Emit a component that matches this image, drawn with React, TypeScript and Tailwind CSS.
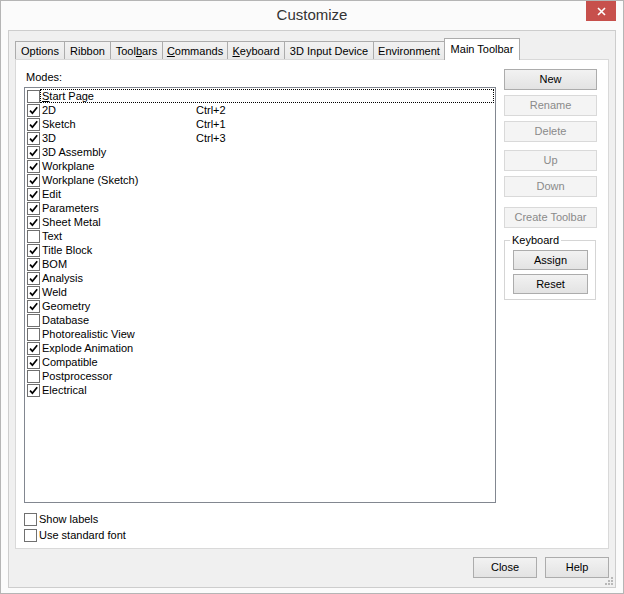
import React from "react";

type Mode = { name: React.ReactNode; on: boolean; key?: string };

const modes: Mode[] = [
  { name: <><u>S</u>tart Page</>, on: false },
  { name: "2D", on: true, key: "Ctrl+2" },
  { name: "Sketch", on: true, key: "Ctrl+1" },
  { name: "3D", on: true, key: "Ctrl+3" },
  { name: "3D Assembly", on: true },
  { name: "Workplane", on: true },
  { name: "Workplane (Sketch)", on: true },
  { name: "Edit", on: true },
  { name: "Parameters", on: true },
  { name: "Sheet Metal", on: true },
  { name: "Text", on: false },
  { name: "Title Block", on: true },
  { name: "BOM", on: true },
  { name: "Analysis", on: true },
  { name: "Weld", on: true },
  { name: "Geometry", on: true },
  { name: "Database", on: false },
  { name: "Photorealistic View", on: false },
  { name: "Explode Animation", on: true },
  { name: "Compatible", on: true },
  { name: "Postprocessor", on: false },
  { name: "Electrical", on: true },
];

const tabs: { label: React.ReactNode; w: string }[] = [
  { label: "Options", w: "w-[50px]" },
  { label: "Ribbon", w: "w-[47px]" },
  { label: <>Tool<u>b</u>ars</>, w: "w-[53px]" },
  { label: <><u>C</u>ommands</>, w: "w-[66px]" },
  { label: <><u>K</u>eyboard</>, w: "w-[58px]" },
  { label: "3D Input Device", w: "w-[90px]" },
  { label: "Environment", w: "w-[72px]" },
];

function Check({ on }: { on: boolean }) {
  return (
    <span className="w-[13px] h-[13px] border border-[#707070] bg-white flex items-center justify-center shrink-0">
      {on && (
        <svg width="9" height="9" viewBox="0 0 9 9">
          <path d="M1 4.6 L3.4 7.2 L8.2 1.2" stroke="#000" strokeWidth="1.7" fill="none" />
        </svg>
      )}
    </span>
  );
}

function Btn({
  label,
  disabled,
  className = "",
}: {
  label: string;
  disabled?: boolean;
  className?: string;
}) {
  return (
    <div
      className={`flex items-center justify-center border ${
        disabled
          ? "border-[#d9d9d9] bg-[#f4f4f4] text-[#8a8a8a]"
          : "border-[#acacac] bg-linear-to-b from-[#f2f2f2] to-[#e3e3e3] text-black"
      } ${className}`}
    >
      {label}
    </div>
  );
}

export default function App() {
  return (
    <div className="w-[624px] h-[594px] bg-[#fbfbfb] border border-[#b5b5b5] flex flex-col font-['Liberation_Sans',Arial,sans-serif] text-[11px] text-black">
      {/* Title bar */}
      <div className="relative h-[29px] flex items-center justify-center text-[15px] text-[#333]">
        Customize
        <div className="absolute top-0 right-[7px] w-[30px] h-[20px] bg-[#c7504c] flex items-center justify-center">
          <svg width="9" height="9" viewBox="0 0 9 9">
            <path d="M1 1 L8 8 M8 1 L1 8" stroke="#fff" strokeWidth="1.6" />
          </svg>
        </div>
      </div>

      {/* Client area */}
      <div className="relative mx-[7px] mb-[5px] flex-1 bg-[#f0f0f0] border border-[#cdcdcd] flex flex-col">
        {/* Tabs */}
        <div className="mt-[7px] ml-[6px] h-[22px] flex items-end">
          {tabs.map((t, i) => (
            <div
              key={i}
              className={`${t.w} h-[19px] -mr-px border border-b-0 border-[#acacac] bg-linear-to-b from-[#f2f2f2] to-[#e8e8e8] flex items-center justify-center`}
            >
              {t.label}
            </div>
          ))}
          <div className="relative z-10 w-[76px] h-[22px] border border-b-0 border-[#acacac] bg-white flex items-start justify-center pt-[2px]">
            Main Toolbar
          </div>
        </div>

        {/* Tab panel */}
        <div className="-mt-px mx-[6px] h-[490px] bg-white border border-[#d9d9d9] flex">
          <div className="ml-[8px] flex flex-col">
            <div className="mt-[10px] h-[14px] mb-[3px] ml-[2px] leading-[14px]">Modes:</div>
            <div className="w-[472px] h-[416px] border border-[#828790] bg-white pt-px">
              {modes.map((m, i) => (
                <div key={i} className="h-[14px] pl-[2px] flex items-center">
                  <Check on={m.on} />
                  <div
                    className={`flex-1 h-[14px] mr-px flex items-center pl-px ${
                      i === 0 ? "border border-dotted border-black" : "border border-transparent"
                    }`}
                  >
                    <span className="w-[154px]">{m.name}</span>
                    {m.key && <span>{m.key}</span>}
                  </div>
                </div>
              ))}
            </div>
            <div className="mt-[8px] h-[16px] flex items-center gap-[2px]">
              <Check on={false} />
              <span>Show labels</span>
            </div>
            <div className="h-[16px] flex items-center gap-[2px]">
              <Check on={false} />
              <span>Use standard font</span>
            </div>
          </div>

          <div className="ml-[8px] w-[93px] flex flex-col">
            <Btn label="New" className="mt-[9px] h-[21px]" />
            <Btn label="Rename" disabled className="mt-[5px] h-[21px]" />
            <Btn label="Delete" disabled className="mt-[5px] h-[21px]" />
            <Btn label="Up" disabled className="mt-[8px] h-[21px]" />
            <Btn label="Down" disabled className="mt-[5px] h-[21px]" />
            <Btn label="Create Toolbar" disabled className="mt-[10px] h-[21px]" />
            <div className="relative mt-[12px] w-[92px] h-[60px] border border-[#d5d5d5] flex flex-col items-start">
              <span className="absolute -top-[8px] left-[5px] bg-white px-[2px] leading-[14px]">Keyboard</span>
              <Btn label="Assign" className="mt-[9px] ml-[8px] w-[75px] h-[20px]" />
              <Btn label="Reset" className="mt-[4px] ml-[8px] w-[75px] h-[20px]" />
            </div>
          </div>
        </div>

        {/* Dialog buttons */}
        <div className="mt-[8px] mx-[6px] flex justify-end gap-[8px]">
          <Btn label="Close" className="w-[64px] h-[21px]" />
          <Btn label="Help" className="w-[64px] h-[21px]" />
        </div>

        {/* Size grip */}
        <svg className="absolute right-[1px] bottom-[1px]" width="9" height="9" viewBox="0 0 9 9">
          <g fill="#b8b8b8">
            <rect x="6" y="0" width="2" height="2" />
            <rect x="3" y="3" width="2" height="2" />
            <rect x="6" y="3" width="2" height="2" />
            <rect x="0" y="6" width="2" height="2" />
            <rect x="3" y="6" width="2" height="2" />
            <rect x="6" y="6" width="2" height="2" />
          </g>
        </svg>
      </div>
    </div>
  );
}
